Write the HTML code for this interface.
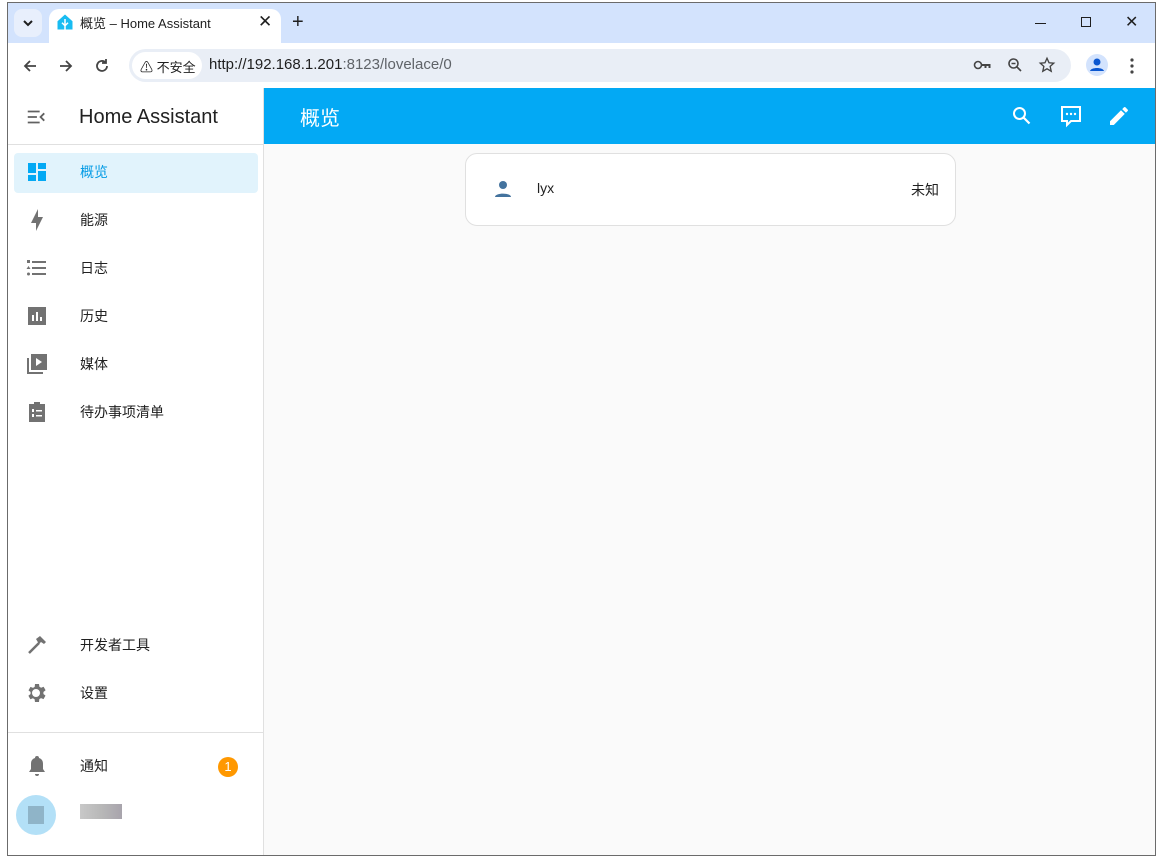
<!DOCTYPE html>
<html><head><meta charset="utf-8"><style>
*{box-sizing:border-box;margin:0;padding:0}
body{width:1163px;height:862px;background:#fff;font-family:"Liberation Sans","Noto Sans CJK SC",sans-serif;position:relative;overflow:hidden}
.abs{position:absolute}
.win{left:7px;top:2px;width:1149px;height:854px;border:1px solid #6b6b6b;background:#fff;overflow:hidden}
.tabbar{left:0;top:0;width:100%;height:40px;background:#d3e3fd}
.tab{left:41px;top:6px;width:232px;height:34px;background:#fff;border-radius:10px 10px 0 0;font-size:13px;color:#1f1f1f}
.toolbar{left:0;top:40px;width:100%;height:46px;background:#fff;border-bottom:1px solid #dcdcdc}
.omni{left:121px;top:6px;width:942px;height:33px;background:#e9eef6;border-radius:17px}
.side{left:0;top:85px;width:256px;height:769px;background:#fff;border-right:1px solid #e0e0e0}
.item{position:absolute;left:6px;width:244px;height:40px;font-size:14px;color:#212121}
.item .t{position:absolute;left:66px;top:9px}
.item svg{position:absolute;left:11px;top:7px}
.main{left:256px;top:85px;width:893px;height:769px;background:#fafafa}
.hdr{left:0;top:0;width:100%;height:56px;background:#03a9f4}
</style></head><body>
<div class="abs win">
 <div class="abs tabbar">
  <div class="abs" style="left:6px;top:6px;width:28px;height:28px;background:#e8effc;border-radius:8px"><svg width="28" height="28"><path d="M10 12l4 4 4-4" stroke="#1f1f1f" stroke-width="2" fill="none"/></svg></div>
  <div class="abs tab">
   <svg class="abs" style="left:7px;top:4px" width="18" height="18" viewBox="0 0 24 24"><path d="M12 2L2 11v11h20V11z" fill="#18bcf2"/><path d="M12 8v14M8 13l4 4 4-4" stroke="#fff" stroke-width="2" fill="none"/></svg>
   <span class="abs" style="left:31px;top:4px">概览 – Home Assistant</span>
   <span class="abs" style="left:209px;top:3px;font-size:17px">✕</span>
  </div>
  <span class="abs" style="left:284px;top:8px;font-size:20px;color:#1f1f1f">+</span>
  <div class="abs" style="left:1027px;top:20px;width:11px;height:1px;background:#1f1f1f"></div>
  <div class="abs" style="left:1073px;top:14px;width:10px;height:10px;border:1px solid #1f1f1f"></div>
  <span class="abs" style="left:1117px;top:9px;font-size:16px;color:#1f1f1f">✕</span>
 </div>
 <div class="abs toolbar">
  <svg class="abs" style="left:14px;top:15px" width="16" height="16"><path d="M14 8H3M8 3L3 8l5 5" stroke="#444" stroke-width="1.8" fill="none"/></svg>
  <svg class="abs" style="left:50px;top:15px" width="16" height="16"><path d="M2 8h11M8 3l5 5-5 5" stroke="#444" stroke-width="1.8" fill="none"/></svg>
  <svg class="abs" style="left:86px;top:15px" width="16" height="16"><path d="M13 8a5 5 0 1 1-1.5-3.6M12 1v4H8" stroke="#444" stroke-width="1.8" fill="none"/></svg>
  <div class="abs omni">
   <div class="abs" style="left:3px;top:3px;width:70px;height:27px;background:#fff;border-radius:14px;font-size:13px;color:#1f1f1f;padding:5px 0 0 8px">⚠ 不安全</div>
   <span class="abs" style="left:80px;top:7px;font-size:15px;color:#1f1f1f">http://192.168.1.201<span style="color:#5f6368">:8123/lovelace/0</span></span>
   <svg class="abs" style="left:844px;top:9px" width="20" height="14"><circle cx="5" cy="7" r="3.5" stroke="#444" stroke-width="1.6" fill="none"/><path d="M8.5 6h9v4h-2v-2h-2v2h-2V8h-3" fill="#444"/></svg>
   <svg class="abs" style="left:878px;top:8px" width="16" height="16"><circle cx="6.5" cy="6.5" r="4.5" stroke="#444" stroke-width="1.6" fill="none"/><path d="M10 10l4 4M4.5 6.5h4" stroke="#444" stroke-width="1.6"/></svg>
   <svg class="abs" style="left:909px;top:7px" width="18" height="18" viewBox="0 0 24 24"><path d="M12 3l2.7 6 6.3.6-4.8 4.3 1.4 6.4L12 17l-5.6 3.3 1.4-6.4L3 9.6 9.3 9z" stroke="#444" stroke-width="1.8" fill="none"/></svg>
  </div>
  <div class="abs" style="left:1078px;top:11px;width:22px;height:22px;border-radius:50%;background:#d3e3fd"><svg width="22" height="22"><circle cx="11" cy="8" r="3.5" fill="#0b57d0"/><path d="M4 17c1-4 13-4 14 0z" fill="#0b57d0"/></svg></div>
  <svg class="abs" style="left:1122px;top:14px" width="4" height="18"><circle cx="2" cy="3" r="1.6" fill="#444"/><circle cx="2" cy="9" r="1.6" fill="#444"/><circle cx="2" cy="15" r="1.6" fill="#444"/></svg>
 </div>
 <div class="abs side">
  <div class="abs" style="left:0;top:0;width:255px;height:57px;border-bottom:1px solid #e0e0e0">
   <svg class="abs" style="left:17px;top:18px" width="22" height="22" viewBox="0 0 24 24"><path d="M3 6h13M3 12h10M3 18h13M21 8l-4 4 4 4" stroke="#616161" stroke-width="2" fill="none"/></svg>
   <span class="abs" style="left:71px;top:18px;font-size:20px;color:#212121">Home Assistant</span>
  </div>
  <div class="item" style="top:65px;background:#e1f3fc;border-radius:4px;color:#039be5"><svg width="24" height="24" viewBox="0 0 24 24"><path d="M3 3h8v10H3zM13 3h8v6h-8zM13 11h8v10h-8zM3 15h8v6H3z" fill="#03a9f4"/></svg><span class="t">概览</span></div>
  <div class="item" style="top:113px"><svg width="24" height="24" viewBox="0 0 24 24"><path d="M11 15H6l7-14v8h5l-7 14z" fill="#727272"/></svg><span class="t">能源</span></div>
  <div class="item" style="top:161px"><svg width="24" height="24" viewBox="0 0 24 24"><path d="M7 5h14v2H7zM7 11h14v2H7zM7 17h14v2H7zM2 4h3v3H2z" fill="#727272"/><path d="M3.5 10l2 3h-4z" fill="#727272"/><circle cx="3.5" cy="18" r="1.5" fill="#727272"/></svg><span class="t">日志</span></div>
  <div class="item" style="top:209px"><svg width="24" height="24" viewBox="0 0 24 24"><path d="M3 3h18v18H3z" fill="#727272"/><path d="M7 11h2v6H7zM11 8h2v9h-2zM15 13h2v4h-2z" fill="#fff"/></svg><span class="t">历史</span></div>
  <div class="item" style="top:257px"><svg width="24" height="24" viewBox="0 0 24 24"><path d="M2 6v16h16v-2H4V6z" fill="#727272"/><path d="M6 2h16v16H6z" fill="#727272"/><path d="M11 6v8l6-4z" fill="#fff"/></svg><span class="t">媒体</span></div>
  <div class="item" style="top:305px"><svg width="24" height="24" viewBox="0 0 24 24"><path d="M4 4h16v18H4z" fill="#727272"/><path d="M9 2h6v4H9z" fill="#727272"/><path d="M7 9h2v3H7zM7 14h2v3H7zM11 10h6v1.5h-6zM11 15h6v1.5h-6z" fill="#fff"/></svg><span class="t">待办事项清单</span></div>
  <div class="item" style="top:538px"><svg width="24" height="24" viewBox="0 0 24 24"><path d="M4 20l10-10" stroke="#727272" stroke-width="2.5"/><path d="M11 6l4-3 6 6-2 2-3-2-2 2z" fill="#727272"/></svg><span class="t">开发者工具</span></div>
  <div class="item" style="top:586px"><svg width="24" height="24" viewBox="0 0 24 24"><path d="M12 8a4 4 0 1 0 0 8 4 4 0 0 0 0-8zm7.4 5l2.1 1.6-2 3.5-2.5-1a7 7 0 0 1-1.7 1L15 21h-4l-.4-2.7a7 7 0 0 1-1.7-1l-2.5 1-2-3.5L6.6 13a7 7 0 0 1 0-2L4.5 9.4l2-3.5 2.5 1a7 7 0 0 1 1.7-1L11 3h4l.4 2.7a7 7 0 0 1 1.7 1l2.5-1 2 3.5L19.4 11a7 7 0 0 1 0 2z" fill="#727272" transform="translate(-1 0)"/></svg><span class="t">设置</span></div>
  <div class="abs" style="left:0;top:644px;width:255px;height:1px;background:#e0e0e0"></div>
  <div class="item" style="top:659px"><svg width="24" height="24" viewBox="0 0 24 24"><path d="M12 2a2 2 0 0 1 2 2c3 1 4 3 4 6v5l2 3H4l2-3v-5c0-3 1-5 4-6a2 2 0 0 1 2-2zM10 20h4a2 2 0 0 1-4 0z" fill="#727272"/></svg><span class="t">通知</span>
   <div class="abs" style="left:204px;top:10px;width:20px;height:20px;border-radius:50%;background:#ff9800;color:#fff;font-size:13px;text-align:center;line-height:20px">1</div></div>
  <div class="abs" style="left:8px;top:707px;width:40px;height:40px;border-radius:50%;background:#b3e0f7"><div class="abs" style="left:12px;top:11px;width:16px;height:18px;background:#8fb4c8"></div></div>
  <div class="abs" style="left:72px;top:716px;width:42px;height:15px;background:linear-gradient(90deg,#c8c8c8,#b8b8b8 50%,#a8a4ac)"></div>
 </div>
 <div class="abs main">
  <div class="abs hdr">
   <span class="abs" style="left:36px;top:14px;font-size:20px;color:#fff">概览</span>
   <svg class="abs" style="left:746px;top:16px" width="24" height="24" viewBox="0 0 24 24"><circle cx="9.5" cy="9.5" r="5.5" stroke="#fff" stroke-width="2" fill="none"/><path d="M13.5 13.5l6 6" stroke="#fff" stroke-width="2.2"/></svg>
   <svg class="abs" style="left:795px;top:16px" width="24" height="24" viewBox="0 0 24 24"><path d="M3 3h18v14h-9l-4 4v-4H3z" stroke="#fff" stroke-width="2" fill="none"/><circle cx="8" cy="10" r="1.2" fill="#fff"/><circle cx="12" cy="10" r="1.2" fill="#fff"/><circle cx="16" cy="10" r="1.2" fill="#fff"/></svg>
   <svg class="abs" style="left:843px;top:16px" width="24" height="24" viewBox="0 0 24 24"><path d="M3 17.2V21h3.8L17.8 9.9l-3.8-3.7zM20.7 7a1 1 0 0 0 0-1.4l-2.3-2.3a1 1 0 0 0-1.4 0l-1.8 1.8 3.7 3.7z" fill="#fff"/></svg>
  </div>
  <div class="abs" style="left:201px;top:65px;width:491px;height:73px;background:#fff;border:1px solid #e0e0e0;border-radius:12px">
   <svg class="abs" style="left:25px;top:23px" width="24" height="24" viewBox="0 0 24 24"><circle cx="12" cy="8" r="4" fill="#44739e"/><path d="M4 20c0-4.5 16-4.5 16 0v0H4z" fill="#44739e"/></svg>
   <span class="abs" style="left:71px;top:26px;font-size:14px;color:#212121">lyx</span>
   <span class="abs" style="left:445px;top:26px;font-size:14px;color:#212121">未知</span>
  </div>
 </div>
</div>
</body></html>
